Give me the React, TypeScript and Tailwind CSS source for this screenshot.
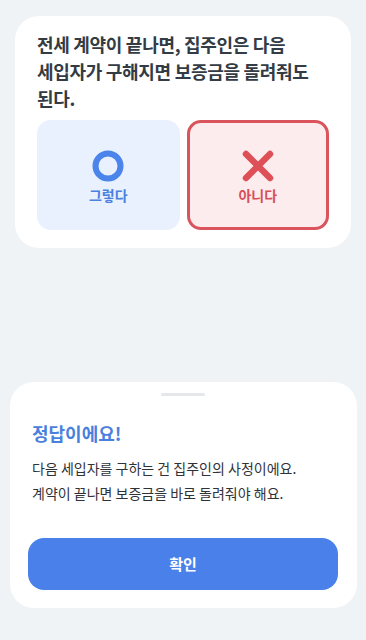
import React from 'react';

const font = { fontFamily: '"Noto Sans CJK KR", "Noto Sans", sans-serif' };

export default function App() {
  return (
    <div className="flex h-[640px] w-full flex-col bg-[#f0f3f5]" style={font}>
      <div className="mx-[15px] mt-4 rounded-[24px] bg-white pb-[18px] pl-[22px] pr-[22px] pt-[15px]">
        <h1 className="break-keep text-[18px] font-bold leading-[27px] tracking-[-0.3px] text-[#333b44]">
          전세 계약이 끝나면, 집주인은 다음 세입자가 구해지면 보증금을 돌려줘도 된다.
        </h1>
        <div className="mt-[8px] grid grid-cols-2 gap-[7px]">
          <button
            type="button"
            className="flex h-[110px] flex-col items-center justify-center rounded-[14px] bg-[#e8f1fd]"
          >
            <svg width="34" height="34" viewBox="0 0 34 34" className="mt-[4px]">
              <circle cx="17" cy="17" r="12.5" fill="none" stroke="#4b84ea" strokeWidth="6" />
            </svg>
            <span className="mt-[2px] text-[14px] font-bold text-[#4a80e0]">그렇다</span>
          </button>
          <button
            type="button"
            className="flex h-[110px] flex-col items-center justify-center rounded-[14px] border-[3px] border-[#d9545c] bg-[#fdeced]"
          >
            <svg width="34" height="34" viewBox="0 0 34 34" className="mt-[4px]">
              <path d="M5 5 L29 29 M29 5 L5 29" stroke="#de5057" strokeWidth="6.5" strokeLinecap="round" />
            </svg>
            <span className="mt-[2px] text-[14px] font-bold text-[#d6505a]">아니다</span>
          </button>
        </div>
      </div>

      <div className="mb-[32px] ml-[10px] mr-[9px] mt-auto rounded-[24px] bg-white pb-[18px] pl-[18px] pr-[19px] pt-[11px]">
        <div className="mx-auto h-[3px] w-[44px] rounded-full bg-[#e5e7eb]" />
        <h2 className="mt-[24px] px-[4px] text-[18px] font-bold leading-[26px] text-[#4a80dd]">정답이에요!</h2>
        <p className="mt-[10px] px-[4px] text-[14px] leading-[25px] text-[#2f3338]">
          다음 세입자를 구하는 건 집주인의 사정이에요.
          <br />
          계약이 끝나면 보증금을 바로 돌려줘야 해요.
        </p>
        <button
          type="button"
          className="mt-[32px] flex h-[52px] w-full items-center justify-center rounded-[16px] bg-[#4a80ea] text-[15px] font-semibold text-white"
        >
          확인
        </button>
      </div>
    </div>
  );
}
